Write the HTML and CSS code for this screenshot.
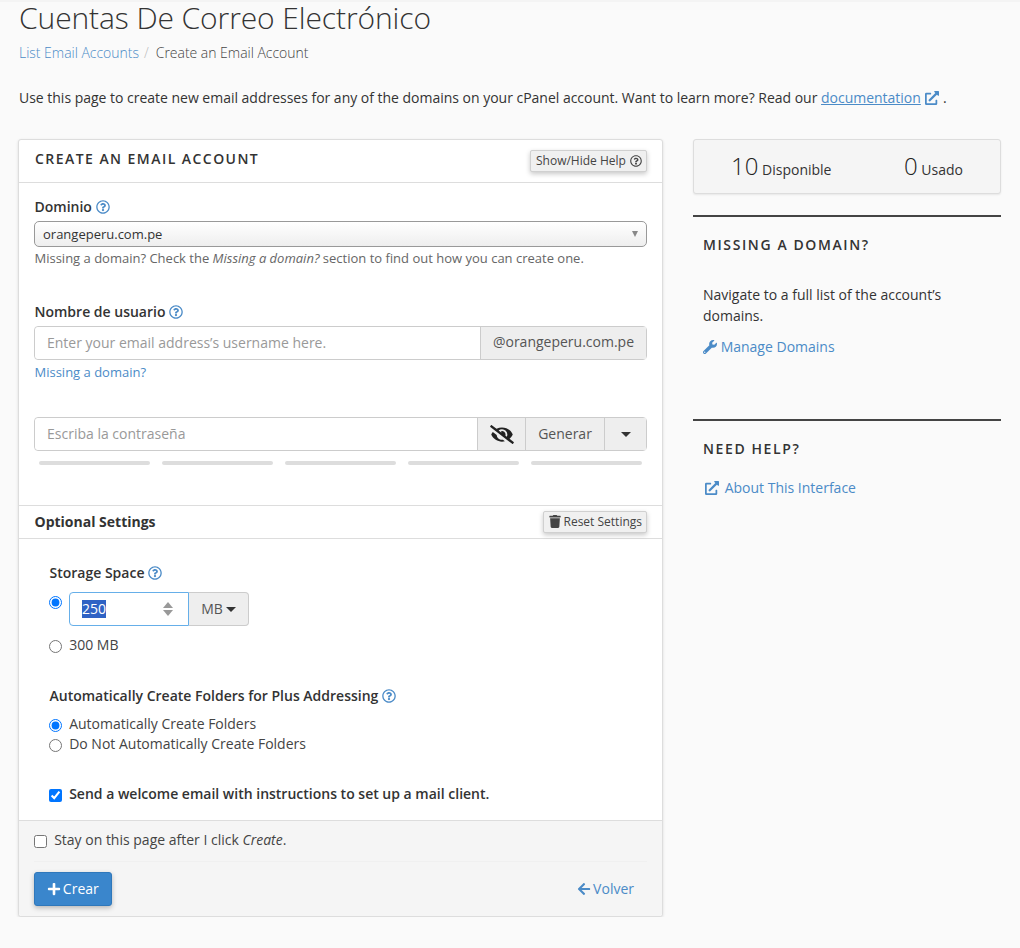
FILE: index.html
```html
<!DOCTYPE html>
<html lang="es">
<head>
  <meta charset="UTF-8" />
  <title>Cuentas De Correo Electrónico</title>
  <link rel="stylesheet" href="styles.css">
</head>
<body>
  <svg class="sprite" xmlns="http://www.w3.org/2000/svg">
    <symbol id="i-help" viewBox="0 0 512 512"><path d="M256 8C119.043 8 8 119.083 8 256c0 136.997 111.043 248 248 248s248-111.003 248-248C504 119.083 392.957 8 256 8zm0 448c-110.532 0-200-89.431-200-200 0-110.495 89.472-200 200-200 110.491 0 200 89.471 200 200 0 110.53-89.431 200-200 200zm107.244-255.2c0 67.052-72.421 68.084-72.421 92.863V300c0 6.627-5.373 12-12 12h-45.647c-6.627 0-12-5.373-12-12v-8.659c0-35.745 27.1-50.034 47.579-61.516 17.561-9.845 28.324-16.541 28.324-29.579 0-17.246-21.999-28.693-39.784-28.693-23.189 0-33.894 10.977-48.942 29.969-4.057 5.12-11.46 6.071-16.666 2.124l-27.824-21.098c-5.107-3.872-6.251-11.066-2.644-16.363C184.846 131.491 214.94 112 261.794 112c49.071 0 101.45 38.304 101.45 88.8zM298 368c0 23.159-18.841 42-42 42s-42-18.841-42-42 18.841-42 42-42 42 18.841 42 42z"/></symbol>
    <symbol id="i-external" viewBox="0 0 512 512"><path d="M432,320H400a16,16,0,0,0-16,16V448H64V128H208a16,16,0,0,0,16-16V80a16,16,0,0,0-16-16H48A48,48,0,0,0,0,112V464a48,48,0,0,0,48,48H400a48,48,0,0,0,48-48V336A16,16,0,0,0,432,320ZM488,0h-128c-21.37,0-32.05,25.91-17,41l35.73,35.73L135,320.37a24,24,0,0,0,0,34L157.67,377a24,24,0,0,0,34,0L435.28,133.32,471,169c15,15,41,4.5,41-17V24A24,24,0,0,0,488,0Z"/></symbol>
    <symbol id="i-wrench" viewBox="0 0 512 512"><path d="M507.73 109.1c-2.24-9.03-13.54-12.09-20.12-5.51l-74.36 74.36-67.88-11.31-11.31-67.88 74.36-74.36c6.62-6.62 3.43-17.9-5.66-20.16-47.38-11.74-99.55.91-136.58 37.93-39.64 39.64-50.55 97.1-34.05 147.2L18.74 402.76c-24.99 24.99-24.99 65.51 0 90.5 24.99 24.99 65.51 24.99 90.5 0l213.21-213.21c50.12 16.71 107.47 5.68 147.37-34.22 37.07-37.07 49.7-89.32 37.91-136.73zM64 472c-13.25 0-24-10.75-24-24 0-13.26 10.75-24 24-24s24 10.74 24 24c0 13.25-10.75 24-24 24z"/></symbol>
    <symbol id="i-trash" viewBox="0 0 448 512"><path d="M432 32H312l-9.4-18.7A24 24 0 0 0 281.1 0H166.8a23.72 23.72 0 0 0-21.4 13.3L136 32H16A16 16 0 0 0 0 48v32a16 16 0 0 0 16 16h416a16 16 0 0 0 16-16V48a16 16 0 0 0-16-16zM53.2 467a48 48 0 0 0 47.9 45h245.8a48 48 0 0 0 47.9-45L416 128H32z"/></symbol>
    <symbol id="i-plus" viewBox="0 0 448 512"><path d="M416 208H272V64c0-17.67-14.33-32-32-32h-32c-17.67 0-32 14.33-32 32v144H32c-17.67 0-32 14.33-32 32v32c0 17.67 14.33 32 32 32h144v144c0 17.67 14.33 32 32 32h32c17.67 0 32-14.33 32-32V304h144c17.67 0 32-14.33 32-32v-32c0-17.67-14.33-32-32-32z"/></symbol>
    <symbol id="i-back" viewBox="0 0 448 512"><path d="M257.5 445.1l-22.2 22.2c-9.4 9.4-24.6 9.4-33.9 0L7 273c-9.4-9.4-9.4-24.6 0-33.9L201.4 44.7c9.4-9.4 24.6-9.4 33.9 0l22.2 22.2c9.5 9.5 9.3 25-.4 34.3L136.6 216H424c13.3 0 24 10.7 24 24v32c0 13.3-10.7 24-24 24H136.6l120.5 114.8c9.8 9.3 10 24.8.4 34.3z"/></symbol>
    <symbol id="i-eye-off" viewBox="0 0 640 512"><path d="M320 400c-75.85 0-137.25-58.71-142.9-133.11L72.2 185.82c-13.79 17.3-26.48 35.59-36.72 55.59a32.35 32.35 0 0 0 0 29.19C89.71 376.41 197.07 448 320 448c26.91 0 52.87-4 77.89-10.46L346 397.39a144.13 144.13 0 0 1-26 2.61zm313.82 58.1l-110.55-85.44a331.25 331.25 0 0 0 81.25-102.07 32.35 32.35 0 0 0 0-29.19C550.29 135.59 442.93 64 320 64a308.15 308.15 0 0 0-147.32 37.7L45.46 3.37A16 16 0 0 0 23 6.18L3.37 31.45A16 16 0 0 0 6.18 53.9l588.36 454.73a16 16 0 0 0 22.46-2.81l19.64-25.27a16 16 0 0 0-2.82-22.45zm-183.72-142l-39.3-30.38A94.75 94.75 0 0 0 416 256a94.76 94.76 0 0 0-121.31-92.21A47.65 47.65 0 0 1 304 192a46.64 46.64 0 0 1-1.54 10l-73.61-56.89A142.31 142.31 0 0 1 320 112a143.92 143.92 0 0 1 144 144c0 21.63-5.29 41.79-13.9 60.11z"/></symbol>
  </svg>

  <div class="page">
    <h1 class="page-title">Cuentas De Correo Electrónico</h1>
    <div class="breadcrumb">
      <a href="#">List Email Accounts</a><span class="crumb-sep">/</span><span>Create an Email Account</span>
    </div>
    <p class="intro">Use this page to create new email addresses for any of the domains on your cPanel account. Want to learn more? Read our <a href="#" class="underlined">documentation</a> <svg class="icon ext-inline"><use href="#i-external"/></svg> .</p>

    <div class="columns">
      <form class="panel">
        <div class="panel-head">
          <h2>Create an Email Account</h2>
          <button type="button" class="btn-help">Show/Hide Help <svg class="icon"><use href="#i-help"/></svg></button>
        </div>

        <div class="panel-body">
          <div class="field field-domain">
            <label class="label">Dominio <svg class="icon help"><use href="#i-help"/></svg></label>
            <div class="select-box">orangeperu.com.pe<span class="select-arrow"></span></div>
            <div class="hint">Missing a domain? Check the <em>Missing a domain?</em> section to find out how you can create one.</div>
          </div>

          <div class="field field-user">
            <label class="label">Nombre de usuario <svg class="icon help"><use href="#i-help"/></svg></label>
            <div class="input-group">
              <input type="text" class="text-input" placeholder="Enter your email address’s username here.">
              <span class="addon addon-domain">@orangeperu.com.pe</span>
            </div>
            <a href="#" class="missing-link">Missing a domain?</a>
          </div>

          <div class="input-group">
            <input type="text" class="text-input" placeholder="Escriba la contraseña">
            <span class="addon addon-eye"><svg class="icon eye"><use href="#i-eye-off"/></svg></span>
            <span class="addon addon-gen">Generar</span>
            <span class="addon addon-caret"><span class="caret"></span></span>
          </div>
          <div class="strength">
            <span></span><span></span><span></span><span></span><span></span>
          </div>
        </div>

        <div class="section-head">
          <h3>Optional Settings</h3>
          <button type="button" class="btn-help btn-reset"><svg class="icon"><use href="#i-trash"/></svg> Reset Settings</button>
        </div>

        <div class="optional">
          <div class="label label-opt">Storage Space <svg class="icon help"><use href="#i-help"/></svg></div>
          <div class="quota-row">
            <input type="radio" name="quota" checked>
            <div class="number-box">
              <span class="selected">250</span>
              <span class="spinner"><i class="up"></i><i class="down"></i></span>
            </div>
            <span class="unit">MB <span class="caret"></span></span>
          </div>
          <label class="option option-300"><input type="radio" name="quota"> 300 MB</label>

          <div class="label label-opt label-plus">Automatically Create Folders for Plus Addressing <svg class="icon help"><use href="#i-help"/></svg></div>
          <label class="option"><input type="radio" name="plus" checked> Automatically Create Folders</label>
          <label class="option"><input type="radio" name="plus"> Do Not Automatically Create Folders</label>

          <label class="option welcome"><input type="checkbox" checked> Send a welcome email with instructions to set up a mail client.</label>
        </div>

        <div class="panel-foot">
          <label class="option stay"><input type="checkbox"> <span>Stay on this page after I click <em>Create</em>.</span></label>
          <div class="foot-actions">
            <button type="button" class="btn-primary"><svg class="icon"><use href="#i-plus"/></svg> Crear</button>
            <a href="#" class="back"><svg class="icon"><use href="#i-back"/></svg> Volver</a>
          </div>
        </div>
      </form>

      <aside class="side">
        <div class="stats">
          <div><span class="num">10</span> Disponible</div>
          <div><span class="num">0</span> Usado</div>
        </div>

        <section class="side-block block-domain">
          <h4>Missing a Domain?</h4>
          <p>Navigate to a full list of the account’s domains.</p>
          <a href="#"><svg class="icon"><use href="#i-wrench"/></svg> Manage Domains</a>
        </section>

        <section class="side-block block-help">
          <h4>Need Help?</h4>
          <a href="#"><svg class="icon"><use href="#i-external"/></svg> About This Interface</a>
        </section>
      </aside>
    </div>
  </div>
</body>
</html>
```

FILE: styles.css
```css
* {
  box-sizing: border-box;
}

body {
  margin: 0;
  background-color: #fafafa;
  color: #333;
  font-family: "Open Sans", sans-serif;
  font-size: 14px;
  line-height: 20px;
  overflow: hidden;
}

a {
  color: #4b8bc7;
  text-decoration: none;
}

.sprite {
  display: none;
}

.icon {
  width: 14px;
  height: 14px;
  fill: currentColor;
  vertical-align: -2px;
}

.page {
  padding: 0 19px 0 18px;
  border-top: 2px solid #f4f4f4;
}

.page-title {
  margin: 0;
  padding-left: 1px;
  font-size: 30px;
  font-weight: 300;
  line-height: 32px;
  letter-spacing: -0.1px;
}

.breadcrumb {
  margin-top: 9px;
  padding-left: 1px;
  font-weight: 300;
  color: #444;
  letter-spacing: -0.02px;
}

.crumb-sep {
  margin: 0 7px 0 5px;
  color: #bbb;
}

.intro {
  margin: 25px 0 0;
  padding-left: 1px;
  letter-spacing: -0.015px;
}

.underlined {
  text-decoration: underline;
}

.ext-inline {
  color: #4b8bc7;
  margin-left: 1px;
}

.columns {
  display: flex;
  align-items: flex-start;
  gap: 30px;
  margin-top: 31px;
}

/* main form */
.panel {
  width: 645px;
  background: #fff;
  border: 1px solid #ddd;
  border-radius: 3px;
  box-shadow: 0 1px 3px rgba(0, 0, 0, 0.12);
}

.panel-head {
  display: flex;
  justify-content: space-between;
  height: 43px;
  padding: 10px 15px 0;
  border-bottom: 1px solid #ddd;
}

.panel-head h2 {
  margin: 0;
  padding-left: 1px;
  font-size: 14px;
  font-weight: 600;
  letter-spacing: 1.45px;
  text-transform: uppercase;
  line-height: 18px;
}

.btn-help {
  height: 22px;
  padding: 0 4px 0 5px;
  background: #f0f0f0;
  border: 1px solid #d0d0d0;
  border-radius: 2px;
  box-shadow: 0 2px 5px rgba(0, 0, 0, 0.22);
  color: #444;
  font-family: inherit;
  font-size: 12px;
  line-height: 18px;
  white-space: nowrap;
}

.btn-help .icon {
  width: 12px;
  height: 12px;
  margin-left: 1px;
}

.panel-body {
  padding: 14px 15px 0;
  height: 322px;
}

.label {
  font-weight: 600;
  line-height: 20px;
  padding-left: 0.5px;
}

.help {
  color: #4b8bc7;
}

.select-box {
  position: relative;
  height: 26px;
  margin-top: 4px;
  padding: 0 8px;
  border: 1px solid #999;
  border-radius: 5px;
  background: linear-gradient(#fff, #eee);
  font-size: 13px;
  line-height: 25px;
}

.select-arrow {
  position: absolute;
  right: 8px;
  top: 9px;
  border-left: 3px solid transparent;
  border-right: 3px solid transparent;
  border-top: 6px solid #888;
}

.hint {
  margin-top: 1px;
  padding-left: 0.5px;
  font-size: 13px;
  line-height: 20px;
  color: #666;
}

.field-user {
  margin-top: 34px;
}

.input-group {
  display: flex;
  height: 34px;
  border: 1px solid #ccc;
  border-radius: 4px;
}

.field-user .input-group {
  margin-top: 4px;
}

.text-input {
  flex: 1;
  min-width: 0;
  height: 100%;
  padding: 0 12px 1px;
  border: 0;
  border-radius: 4px;
  background: #fff;
  color: #333;
  font-family: inherit;
  font-size: 14px;
  outline: none;
}

.text-input::placeholder {
  color: #999;
  opacity: 1;
}

.addon {
  display: flex;
  align-items: center;
  justify-content: center;
  background: #eee;
  border-left: 1px solid #ccc;
  color: #555;
}

.addon-domain {
  width: 166px;
  padding-bottom: 2px;
}

.addon-eye {
  width: 48px;
  color: #222;
}

.eye {
  width: 24px;
  height: 19px;
}

.addon-gen {
  width: 79px;
  padding-bottom: 1px;
}

.addon-caret {
  width: 42px;
}

.caret {
  display: inline-block;
  border-left: 5px solid transparent;
  border-right: 5px solid transparent;
  border-top: 5px solid #333;
  vertical-align: 2px;
}

.missing-link {
  display: block;
  margin-top: 2px;
  padding-left: 0.5px;
  font-size: 13px;
  line-height: 20px;
}

.field-user + .input-group {
  margin-top: 35px;
}

.strength {
  display: flex;
  gap: 12px;
  margin-top: 10px;
  padding: 0 5px;
}

.strength span {
  flex: 1;
  height: 4px;
  border-radius: 2px;
  background: #ddd;
}

.section-head {
  display: flex;
  justify-content: space-between;
  align-items: center;
  height: 34px;
  padding: 0 15px;
  border-top: 1px solid #ddd;
  border-bottom: 1px solid #ddd;
}

.section-head h3 {
  margin: 0;
  padding-left: 0.5px;
  font-size: 14px;
  font-weight: 700;
}

.btn-reset .icon {
  width: 12px;
  height: 13px;
  margin: 0 -1px 0 0;
}

.optional {
  padding: 24px 30px 0;
  height: 281px;
}

.label-opt {
  color: #333;
}

.quota-row {
  display: flex;
  align-items: flex-start;
  margin-top: 9px;
}

.quota-row input {
  width: 13px;
  height: 13px;
  margin: 4px 7px 0 0;
}

.number-box {
  display: flex;
  justify-content: space-between;
  align-items: center;
  width: 120px;
  height: 34px;
  padding: 0 15px 0 12px;
  border: 1px solid #66afe9;
  border-radius: 4px 0 0 4px;
  background: #fff;
}

.selected {
  background: #2f62c4;
  color: #fff;
  line-height: 18px;
}

.spinner i {
  display: block;
  border-left: 5px solid transparent;
  border-right: 5px solid transparent;
}

.spinner .up {
  border-bottom: 6px solid #999;
  margin-bottom: 2px;
}

.spinner .down {
  border-top: 6px solid #999;
}

.unit {
  display: flex;
  align-items: center;
  gap: 3px;
  justify-content: center;
  width: 60px;
  height: 34px;
  background: #eee;
  border: 1px solid #ccc;
  border-left: 0;
  border-radius: 0 4px 4px 0;
  color: #555;
}

.option {
  display: block;
  color: #444;
  line-height: 20px;
}

.option input {
  width: 13px;
  height: 13px;
  margin: 0 3.5px 0 0;
  vertical-align: -3px;
}

.option-300 {
  margin-top: 9px;
}

.label-plus {
  margin-top: 31px;
  margin-bottom: 8px;
}

.welcome {
  margin-top: 30px;
  font-weight: 600;
  color: #333;
}

.panel-foot {
  height: 96px;
  padding: 9px 15px 0;
  background: #f5f5f5;
  border-top: 1px solid #ddd;
  border-radius: 0 0 3px 3px;
}

.stay {
  padding-bottom: 11px;
  border-bottom: 1px solid #f0f0f0;
}

.foot-actions {
  display: flex;
  justify-content: space-between;
  align-items: center;
  margin-top: 10px;
}

.btn-primary {
  width: 78px;
  height: 34px;
  padding: 0 0 2px;
  background: #3a86cc;
  border: 1px solid #2f78bb;
  border-radius: 3px;
  box-shadow: 0 2px 5px rgba(0, 0, 0, 0.25);
  color: #fff;
  font-family: inherit;
  font-size: 14px;
}

.btn-primary .icon {
  margin-right: -2px;
}

.back {
  margin-right: 13px;
}

.back .icon {
  margin-right: -2px;
}

/* sidebar */
.side {
  width: 308px;
}

.stats {
  display: flex;
  justify-content: space-between;
  height: 55px;
  padding: 10px 37px 0;
  background: #f5f5f5;
  border: 1px solid #ddd;
  border-radius: 3px;
  box-shadow: 0 1px 2px rgba(0, 0, 0, 0.08);
}

.num {
  font-size: 24px;
  font-weight: 300;
  line-height: 32px;
  color: #222;
}

.side-block {
  padding: 0 10px;
  border-top: 2px solid #444;
}

.block-domain {
  margin-top: 21px;
  height: 204px;
}

.side-block h4 {
  margin: 0;
  padding-top: 18px;
  font-size: 14px;
  font-weight: 600;
  letter-spacing: 1.6px;
  text-transform: uppercase;
  line-height: 20px;
}

.side-block p {
  margin: 29px 0 0;
  line-height: 21px;
}

.side-block a {
  display: block;
}

.block-domain a {
  margin-top: 11px;
}

.block-help a {
  margin-top: 19px;
}

.block-help .icon {
  margin: 0 2px;
}
```
